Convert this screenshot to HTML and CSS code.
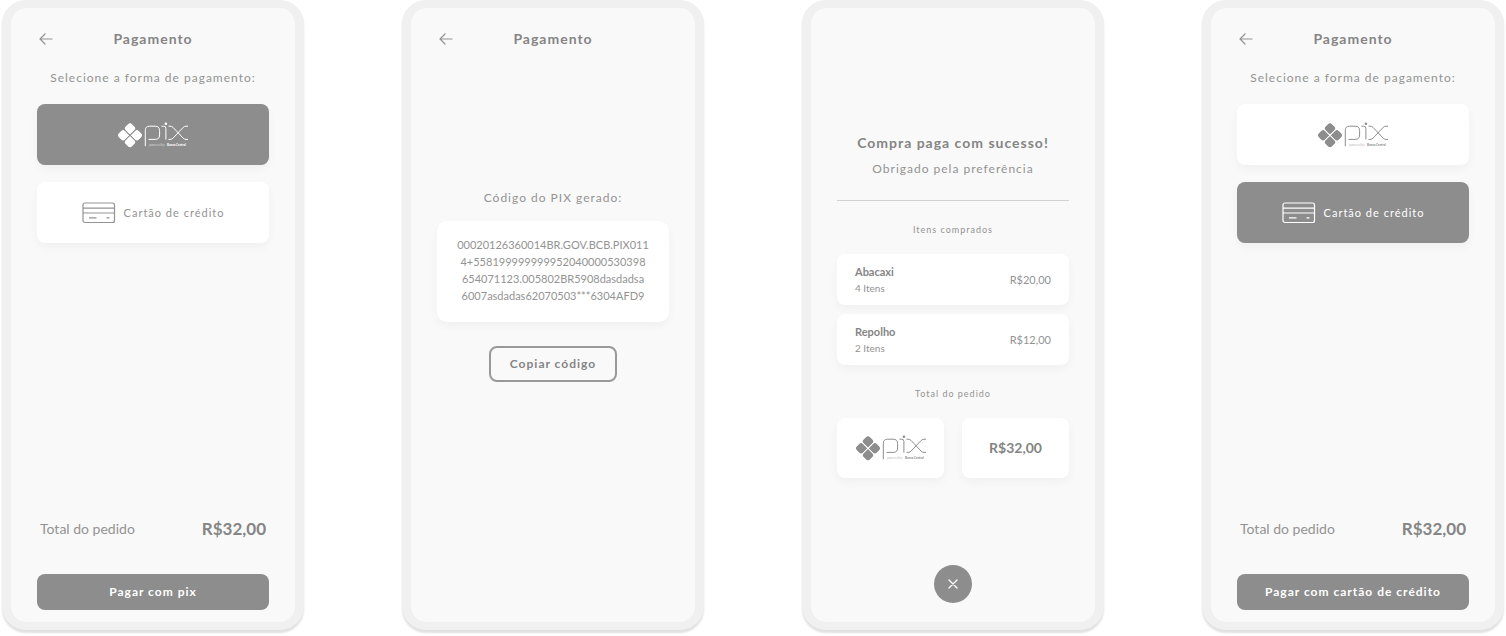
FILE: index.html
```html
<!DOCTYPE html>
<html lang="pt-BR">
<head>
<meta charset="utf-8">
<meta name="viewport" content="width=device-width, initial-scale=1">
<title>Pagamento</title>
<link rel="stylesheet" href="styles.css">
</head>
<body>
<svg class="sprite" aria-hidden="true">
  <symbol id="arrow" viewBox="0 0 14 12"><path d="M13 6H1.200M6 1 1 6l5 5" fill="none" stroke="currentColor" stroke-width="1.200" stroke-linecap="round" stroke-linejoin="round"/></symbol>
  <symbol id="petal" viewBox="0 0 9 9"><path d="M3.500 0H6Q9 0 9 3V8.400Q9 9 8.400 9H3Q0 9 0 6V3.500Q0 0 3.500 0Z"/></symbol>
  <symbol id="pix" viewBox="0 0 72 26">
    <g fill="currentColor" transform="translate(13 13.300) rotate(45)">
      <use href="#petal" x="-9.400" y="-9.400" width="9" height="9"/>
      <use href="#petal" x="-9.400" y="-9.400" width="9" height="9" transform="rotate(90)"/>
      <use href="#petal" x="-9.400" y="-9.400" width="9" height="9" transform="rotate(180)"/>
      <use href="#petal" x="-9.400" y="-9.400" width="9" height="9" transform="rotate(270)"/>
    </g>
    <g fill="none" stroke="currentColor" stroke-width="1">
      <path d="M28.300 24.200V8.500Q28.300 4.200 32.500 4.200H38.200Q42.600 4.200 42.600 8.600V13Q42.600 17.400 38.200 17.400H31.500"/>
      <path d="M44.500 4.200H46.800Q48.900 4.200 48.900 6.400V17.600"/>
      <path d="M51.500 4.200H53Q54.800 4.200 56 5.400L66.200 16.200Q67.300 17.400 69 17.400H71M51.500 17.400H53Q54.800 17.400 56 16.200L66.200 5.400Q67.300 4.200 69 4.200H71"/>
    </g>
    <circle cx="48.900" cy="1.800" r="1.300" fill="currentColor"/>
    <text class="pix-note" x="32" y="24"><tspan opacity=".6">powered by</tspan><tspan x="50" font-weight="900">Banco Central</tspan></text>
  </symbol>
  <symbol id="card" viewBox="0 0 34 22"><g fill="none" stroke="currentColor" stroke-width="1.200"><rect x="1" y="1" width="31.500" height="19.500" rx="2"/><path d="M1 6.200H32.500M1 11H32.500M7 15.800h7.500M24.500 15.800h3"/></g></symbol>
  <symbol id="close" viewBox="0 0 10 10"><path d="M1 1l8 8M9 1 1 9" fill="none" stroke="currentColor" stroke-width="1.300" stroke-linecap="round"/></symbol>
</svg>
<main class="board">
  <section class="phone">
    <header class="topbar">
      <button class="back" type="button" aria-label="Voltar"><svg><use href="#arrow"/></svg></button>
      <h1 class="title">Pagamento</h1>
    </header>
    <p class="hint">Selecione a forma de pagamento:</p>
    <div class="methods">
      <button class="method selected" type="button" aria-label="Pix"><svg class="pix"><use href="#pix"/></svg></button>
      <button class="method" type="button"><svg class="card-icon"><use href="#card"/></svg>Cartão de crédito</button>
    </div>
    <footer class="checkout">
      <div class="total"><span>Total do pedido</span><strong>R$32,00</strong></div>
      <button class="pay" type="button">Pagar com pix</button>
    </footer>
  </section>

  <section class="phone">
    <header class="topbar">
      <button class="back" type="button" aria-label="Voltar"><svg><use href="#arrow"/></svg></button>
      <h1 class="title">Pagamento</h1>
    </header>
    <div class="pix-code">
      <p class="hint">Código do PIX gerado:</p>
      <p class="code">00020126360014BR.GOV.BCB.PIX011<br>4+558199999999952040000530398<br>654071123.005802BR5908dasdadsa<br>6007asdadas62070503***6304AFD9</p>
      <button class="copy" type="button">Copiar código</button>
    </div>
  </section>

  <section class="phone receipt">
    <h1 class="success">Compra paga com sucesso!</h1>
    <p class="hint">Obrigado pela preferência</p>
    <hr class="rule">
    <h2 class="label">Itens comprados</h2>
    <ul class="items">
      <li class="item"><div><strong>Abacaxi</strong><small>4 Itens</small></div><span>R$20,00</span></li>
      <li class="item"><div><strong>Repolho</strong><small>2 Itens</small></div><span>R$12,00</span></li>
    </ul>
    <h2 class="label">Total do pedido</h2>
    <div class="summary">
      <div class="tile"><svg class="pix"><use href="#pix"/></svg></div>
      <strong class="tile">R$32,00</strong>
    </div>
    <button class="close" type="button" aria-label="Fechar"><svg><use href="#close"/></svg></button>
  </section>

  <section class="phone">
    <header class="topbar">
      <button class="back" type="button" aria-label="Voltar"><svg><use href="#arrow"/></svg></button>
      <h1 class="title">Pagamento</h1>
    </header>
    <p class="hint">Selecione a forma de pagamento:</p>
    <div class="methods">
      <button class="method" type="button" aria-label="Pix"><svg class="pix"><use href="#pix"/></svg></button>
      <button class="method selected" type="button"><svg class="card-icon"><use href="#card"/></svg>Cartão de crédito</button>
    </div>
    <footer class="checkout">
      <div class="total"><span>Total do pedido</span><strong>R$32,00</strong></div>
      <button class="pay" type="button">Pagar com cartão de crédito</button>
    </footer>
  </section>
</main>
</body>
</html>
```
FILE: styles.css
```css
:root {
  --accent: #8d8d8d;
  --strong: #858585;
  --text: #939393;
  --shadow: 0 4px 10px rgba(0, 0, 0, .04);
}

* { box-sizing: border-box; }

body, h1, h2, p, ul { margin: 0; padding: 0; }

body {
  background: #fff;
  color: var(--text);
  font: 12px/16px Lato, "Noto Sans", sans-serif;
}

button {
  border: 0;
  padding: 0;
  background: none;
  color: inherit;
  font: inherit;
  letter-spacing: inherit;
}

svg { display: block; }

.sprite { display: none; }

.board {
  display: flex;
  justify-content: space-between;
  gap: 16px;
  min-height: 100vh;
  padding: 0 2px 6px;
}

.phone {
  display: flex;
  flex: 0 1 302px;
  flex-direction: column;
  padding: 21px 26px 12px;
  border: 8px solid #f0f0f0;
  border-width: 8px 9px;
  border-radius: 24px;
  background: #f9f9f9;
  box-shadow: 0 3px 2px rgba(0, 0, 0, .12);
}

.topbar {
  display: grid;
  grid-template-columns: 32px 1fr 32px;
  align-items: center;
}

.back { padding-left: 2px; }
.back svg { width: 14px; height: 12px; }

.title {
  color: var(--strong);
  font-size: 14px;
  line-height: 20px;
  letter-spacing: 1px;
  text-align: center;
}

.hint {
  letter-spacing: 1px;
  text-align: center;
}

.topbar + .hint { margin-top: 21px; }

.methods {
  display: grid;
  gap: 17px;
  margin-top: 18px;
}

.method {
  display: flex;
  align-items: center;
  justify-content: center;
  gap: 8px;
  height: 61px;
  border-radius: 8px;
  background: #fff;
  box-shadow: var(--shadow);
  font-size: 11px;
  letter-spacing: 1px;
}

.selected { background: var(--accent); color: #fff; }

.pix { width: 72px; height: 26px; color: var(--accent); }
.selected .pix { color: #fff; }
.pix-note { fill: currentColor; font-size: 3px; letter-spacing: 0; }
.card-icon { width: 34px; height: 22px; }

.checkout { margin-top: auto; }

.total {
  display: flex;
  align-items: center;
  justify-content: space-between;
  padding: 0 3px;
  margin-bottom: 33px;
  font-size: 14px;
  line-height: 24px;
}

.total strong { color: var(--strong); font-size: 17px; }

.pay {
  width: 100%;
  height: 36px;
  border-radius: 8px;
  background: var(--accent);
  color: #fff;
  font-weight: 700;
  letter-spacing: 1px;
}

.pix-code {
  display: flex;
  flex-direction: column;
  align-items: center;
  margin-top: 141px;
}

.code {
  align-self: stretch;
  margin: 15px 0 24px;
  padding: 15px 0 18px;
  border-radius: 10px;
  background: #fff;
  box-shadow: var(--shadow);
  font-size: 11px;
  line-height: 17px;
  text-align: center;
}

.copy {
  width: 128px;
  height: 36px;
  border: 2px solid #999;
  border-radius: 8px;
  color: var(--strong);
  font-weight: 700;
  letter-spacing: 1px;
}

.receipt { padding-top: 125px; padding-bottom: 19px; }

.success {
  margin-bottom: 8px;
  color: var(--strong);
  font-size: 14px;
  line-height: 20px;
  letter-spacing: 1px;
  text-align: center;
}

.rule {
  width: 100%;
  margin: 23px 0 22px;
  border: 0;
  border-top: 1px solid #d2d2d2;
}

.label {
  font-size: 9px;
  font-weight: 400;
  line-height: 14px;
  letter-spacing: 1px;
  text-align: center;
}

.items {
  display: grid;
  gap: 9px;
  margin: 17px 0 22px;
  list-style: none;
}

.item {
  display: flex;
  align-items: center;
  justify-content: space-between;
  height: 51px;
  padding: 0 18px;
  border-radius: 8px;
  background: #fff;
  box-shadow: var(--shadow);
  font-size: 11px;
}

.item strong { display: block; color: var(--strong); }
.item small { display: block; font-size: 10px; }

.summary {
  display: grid;
  grid-template-columns: 1fr 1fr;
  gap: 18px;
  margin-top: 17px;
}

.tile {
  display: flex;
  align-items: center;
  justify-content: center;
  height: 60px;
  border-radius: 8px;
  background: #fff;
  box-shadow: var(--shadow);
  color: var(--strong);
  font-size: 14px;
}

.close {
  display: grid;
  place-items: center;
  align-self: center;
  width: 38px;
  height: 38px;
  margin-top: auto;
  border-radius: 50%;
  background: var(--accent);
  color: #fff;
}

.close svg { width: 10px; height: 10px; }
```
